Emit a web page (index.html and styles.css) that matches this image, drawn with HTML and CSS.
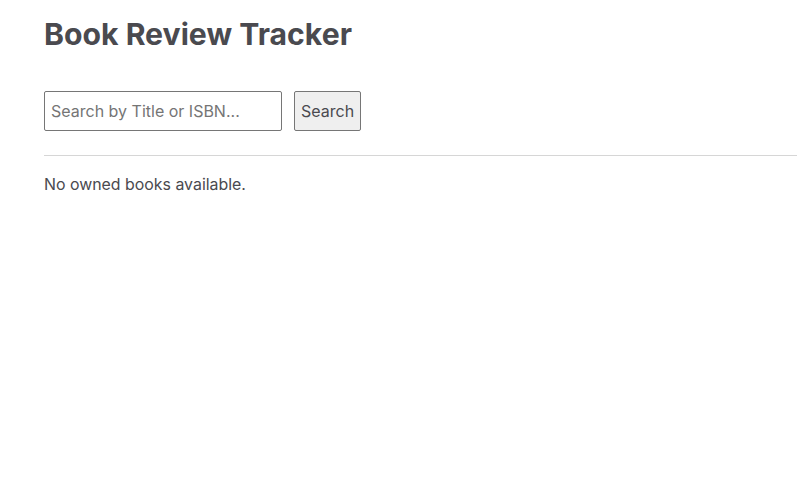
FILE: index.html
```html
<!DOCTYPE html>
<html>
<head>
<meta charset="utf-8">
<link rel="stylesheet" href="styles.css">
</head>
<body>
<main class="app">
  <h1 class="title">Book Review Tracker</h1>
  <form class="search">
    <input class="search-input" type="text" placeholder="Search by Title or ISBN...">
    <button class="search-btn" type="button">Search</button>
  </form>
  <hr class="divider">
  <p class="empty">No owned books available.</p>
</main>
</body>
</html>
```

FILE: styles.css
```css
html, body {
  margin: 0;
  padding: 0;
  background: #ffffff;
}
body {
  font-family: Inter, "Noto Sans", sans-serif;
  color: #4a4a4f;
}
.app {
  padding: 16px 0 0 44px;
}
.title {
  margin: 0;
  font-size: 30.2px;
  font-weight: 700;
  line-height: 36px;
  color: #4a4a4f;
}
.search {
  display: flex;
  gap: 12px;
  margin-top: 39px;
}
.search-input {
  box-sizing: border-box;
  width: 238px;
  height: 40px;
  padding: 0 6px;
  border: 1px solid #767676;
  border-radius: 2px;
  font-family: Inter, sans-serif;
  font-size: 16px;
  color: #333;
}
.search-input::placeholder {
  color: #757575;
}
.search-btn {
  box-sizing: border-box;
  height: 40px;
  padding: 0 6px;
  border: 1px solid #767676;
  border-radius: 2px;
  background: #efefef;
  font-family: Inter, sans-serif;
  font-size: 16px;
  color: #4a4a4f;
}
.divider {
  margin: 24px 0 0 0;
  border: 0;
  border-top: 1px solid #d6d6d6;
}
.empty {
  margin: 19px 0 0 0;
  font-size: 15.9px;
  line-height: 20px;
}
```
